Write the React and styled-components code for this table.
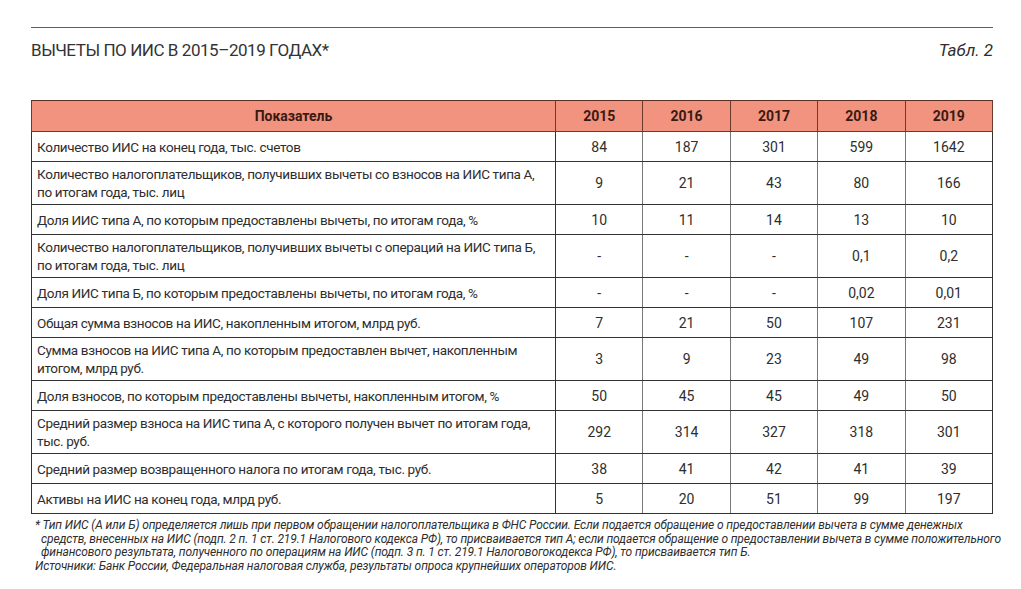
import React from 'react'
import styled, { createGlobalStyle } from 'styled-components'

const GlobalStyle = createGlobalStyle`
    html, body {
        margin: 0;
        padding: 0;
        background: #fff;
    }
`

const years = ['2015', '2016', '2017', '2018', '2019']

const rows = [
    { label: 'Количество ИИС на конец года, тыс. счетов', values: ['84', '187', '301', '599', '1642'] },
    { label: 'Количество налогоплательщиков, получивших вычеты со взносов на ИИС типа А, по итогам года, тыс. лиц', values: ['9', '21', '43', '80', '166'], tall: true },
    { label: 'Доля ИИС типа А, по которым предоставлены вычеты, по итогам года, %', values: ['10', '11', '14', '13', '10'] },
    { label: 'Количество налогоплательщиков, получивших вычеты с операций на ИИС типа Б, по итогам года, тыс. лиц', values: ['-', '-', '-', '0,1', '0,2'], tall: true },
    { label: 'Доля ИИС типа Б, по которым предоставлены вычеты, по итогам года, %', values: ['-', '-', '-', '0,02', '0,01'] },
    { label: 'Общая сумма взносов на ИИС, накопленным итогом, млрд руб.', values: ['7', '21', '50', '107', '231'] },
    { label: 'Сумма взносов на ИИС типа А, по которым предоставлен вычет, накопленным итогом, млрд руб.', values: ['3', '9', '23', '49', '98'], tall: true },
    { label: 'Доля взносов, по которым предоставлены вычеты, накопленным итогом, %', values: ['50', '45', '45', '49', '50'] },
    { label: 'Средний размер взноса на ИИС типа А, с которого получен вычет по итогам года, тыс. руб.', values: ['292', '314', '327', '318', '301'], tall: true },
    { label: 'Средний размер возвращенного налога по итогам года, тыс. руб.', values: ['38', '41', '42', '41', '39'] },
    { label: 'Активы на ИИС на конец года, млрд руб.', values: ['5', '20', '51', '99', '197'] },
]

const App = () => (
    <Page>
        <GlobalStyle />
        <TitleBar>
            <Title>ВЫЧЕТЫ ПО ИИС В 2015–2019 ГОДАХ*</Title>
            <TableNo>Табл. 2</TableNo>
        </TitleBar>
        <Table>
            <colgroup>
                <col style={{ width: 524 }} />
                {years.map(y => <col key={y} />)}
            </colgroup>
            <thead>
                <tr>
                    <HeadCell>Показатель</HeadCell>
                    {years.map(y => <HeadCell key={y}>{y}</HeadCell>)}
                </tr>
            </thead>
            <tbody>
                {rows.map((r, i) => (
                    <Row key={i} $tall={r.tall}>
                        <LabelCell>{r.label}</LabelCell>
                        {r.values.map((v, j) => <ValueCell key={j}>{v}</ValueCell>)}
                    </Row>
                ))}
            </tbody>
        </Table>
        <Notes>
            <Note>* Тип ИИС (А или Б) определяется лишь при первом обращении налогоплательщика в ФНС России. Если подается обращение о предоставлении вычета в сумме денежных средств, внесенных на ИИС (подп. 2 п. 1 ст. 219.1 Налогового кодекса РФ), то присваивается тип А; если подается обращение о предоставлении вычета в сумме положительного финансового результата, полученного по операциям на ИИС (подп. 3 п. 1 ст. 219.1 Налоговогокодекса РФ), то присваивается тип Б.</Note>
            <Source>Источники: Банк России, Федеральная налоговая служба, результаты опроса крупнейших операторов ИИС.</Source>
        </Notes>
    </Page>
)

export default App


const Page = styled.div`
    padding: 27px 28px 0 31px;
    font-family: Roboto, "Liberation Sans", sans-serif;
    color: #2e2e2e;
`

const TitleBar = styled.div`
    display: flex;
    align-items: flex-start;
    justify-content: space-between;
    border-top: 1px solid #c9303e;
    padding-top: 10px;
    height: 62px;
`

const Title = styled.h1`
    margin: 0;
    font-size: 17px;
    font-weight: 400;
    letter-spacing: -0.45px;
    line-height: 24px;
    color: #333;
`

const TableNo = styled.div`
    font-size: 17px;
    font-style: italic;
    line-height: 24px;
`

const Table = styled.table`
    width: 962px;
    border-collapse: collapse;
    table-layout: fixed;
    font-size: 14px;
`

const HeadCell = styled.th`
    height: 30px;
    padding: 0;
    background: #f1937f;
    color: #3a1a12;
    font-size: 14px;
    font-weight: 700;
    text-align: center;
    border: 1px solid #6b3a2c;
    border-top-color: #5a2e22;
`

const Row = styled.tr`
    height: ${p => p.$tall ? 43 : 30}px;
`

const LabelCell = styled.td`
    padding: 2px 6px 2px 5px;
    font-size: 13.5px;
    letter-spacing: -0.35px;
    line-height: 18px;
    border: 1px solid #333;
    vertical-align: middle;
`

const ValueCell = styled.td`
    padding: 0;
    text-align: center;
    border: 1px solid #333;
    border-left-color: #777;
    border-right-color: #777;
    &:last-child {
        border-right-color: #333;
    }
`

const Notes = styled.div`
    padding: 5px 0 0 4px;
    font-size: 12px;
    font-style: italic;
    letter-spacing: -0.12px;
    line-height: 13.5px;
    width: 970px;
`

const Note = styled.p`
    margin: 0;
    padding-left: 6px;
    text-indent: -6px;
`

const Source = styled.p`
    margin: 0;
`
